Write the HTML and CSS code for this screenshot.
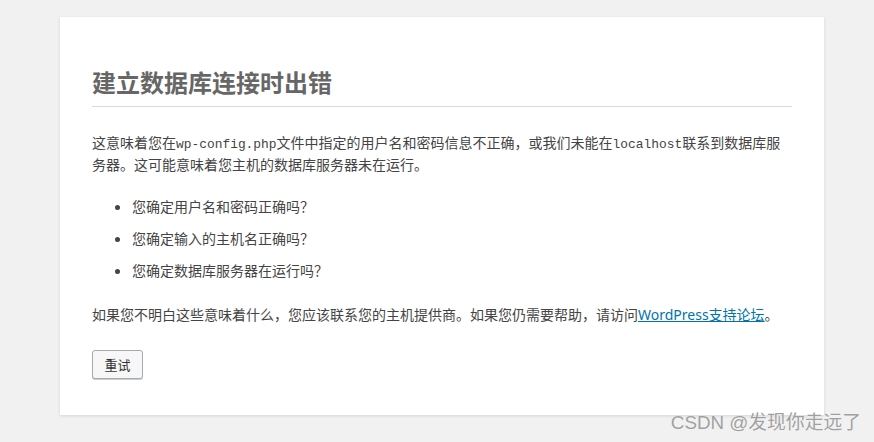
FILE: index.html
```html
<!DOCTYPE html>
<html lang="zh-CN">
<head>
<meta charset="utf-8">
<title>WordPress › 错误</title>
<link rel="stylesheet" href="styles.css">
</head>
<body>
<div class="page">
  <div class="card">
    <h1 class="title">建立数据库连接时出错</h1>
    <p class="msg">这意味着您在<code class="code">wp-config.php</code>文件中指定的用户名和密码信息不正确，或我们未能在<code class="code">localhost</code>联系到数据库服务器。这可能意味着您主机的数据库服务器未在运行。</p>
    <ul class="list">
      <li class="item">您确定用户名和密码正确吗？</li>
      <li class="item">您确定输入的主机名正确吗？</li>
      <li class="item">您确定数据库服务器在运行吗？</li>
    </ul>
    <p class="msg msg-help">如果您不明白这些意味着什么，您应该联系您的主机提供商。如果您仍需要帮助，请访问<a class="link" href="#">WordPress支持论坛</a>。</p>
    <div class="actions"><button class="button" type="button">重试</button></div>
  </div>
</div>
<div class="watermark">CSDN @发现你走远了</div>
</body>
</html>
```

FILE: styles.css
```css
html, body {
  margin: 0;
  padding: 0;
  background: #f1f1f1;
}
body {
  font-family: "Noto Sans", "Noto Sans CJK SC", sans-serif;
  color: #444;
  font-size: 14px;
  position: relative;
  width: 874px;
  height: 442px;
  overflow: hidden;
}
.page {
  padding-top: 17px;
  padding-left: 60px;
}
.card {
  box-sizing: border-box;
  width: 764px;
  background: #fff;
  padding: 50px 32px 36px;
  box-shadow: 0 1px 3px rgba(0, 0, 0, 0.12);
}
.title {
  margin: 0;
  font-family: "Noto Sans CJK SC", sans-serif;
  font-size: 24px;
  line-height: 30px;
  font-weight: 700;
  color: #666;
  padding-bottom: 9px;
  border-bottom: 1px solid #dadada;
}
.msg {
  margin: 24px 0 0;
  font-family: "Noto Sans CJK SC", sans-serif;
  font-size: 14px;
  line-height: 22px;
}
.code {
  font-family: "Liberation Mono", "DejaVu Sans Mono", monospace;
  font-size: 12.9px;
  line-height: 1;
}
.list {
  margin: 20px 0 0;
  padding-left: 40px;
  font-family: "Noto Sans CJK SC", sans-serif;
}
.item {
  font-size: 14px;
  line-height: 22px;
  margin-bottom: 10px;
}
.item:last-child {
  margin-bottom: 0;
}
.msg-help {
  margin-top: 22px;
}
.link {
  color: #0073aa;
  text-decoration: underline;
  font-family: "Noto Sans", "Noto Sans CJK SC", sans-serif;
  line-height: 1;
}
.actions {
  margin-top: 25px;
  display: flex;
}
.button {
  box-sizing: border-box;
  width: 51px;
  height: 29px;
  padding: 0;
  background: #f7f7f7;
  border: 1px solid #a7aaad;
  border-radius: 3px;
  box-shadow: 0 1px 0 #ccc;
  color: #333;
  font-family: "Noto Sans CJK SC", sans-serif;
  font-size: 13px;
  line-height: 27px;
  cursor: pointer;
}
.watermark {
  position: absolute;
  right: 13px;
  top: 412px;
  font-family: "Liberation Sans", "Noto Sans CJK SC", sans-serif;
  font-size: 18.8px;
  line-height: 22px;
  color: #a0a0a0;
  text-shadow: 0 0 1px #fff;
  white-space: nowrap;
}
```
